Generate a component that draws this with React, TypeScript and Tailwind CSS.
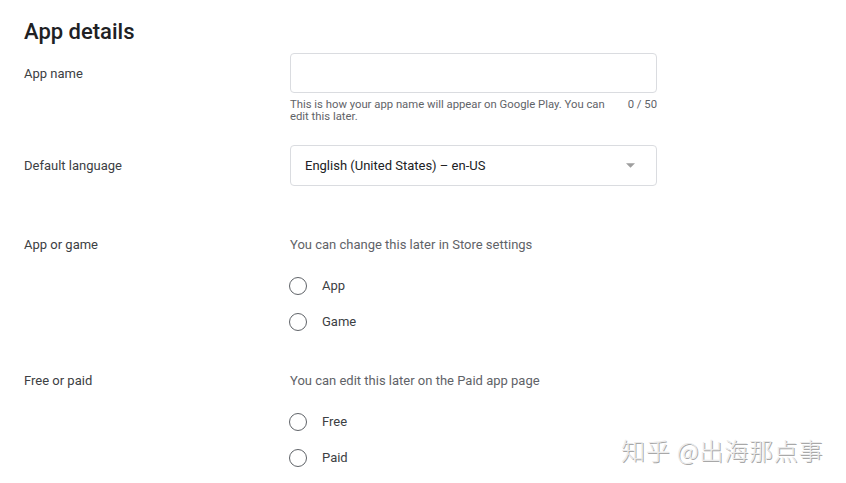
import React from "react";

function Radio({ label }: { label: string }) {
  return (
    <div className="flex items-center h-[36px]">
      <span className="w-[18px] h-[18px] rounded-full border-[1.5px] border-[#5f6368] ml-[-1px]" />
      <span className="ml-[15px] text-[13px] text-[#3c4043]">{label}</span>
    </div>
  );
}

export default function App() {
  return (
    <div
      className="w-[846px] h-[483px] bg-white relative overflow-hidden"
      style={{ fontFamily: "Roboto, 'Noto Sans', sans-serif" }}
    >
      <div className="pl-[24px] pt-[18px]">
        <h1 className="text-[22px] font-medium text-[#202124] leading-[28px]">App details</h1>

        {/* App name */}
        <div className="flex mt-[7px]">
          <div className="w-[266px] text-[13px] text-[#3c4043] pt-[13px] leading-[16px]">App name</div>
          <div className="w-[367px]">
            <div className="h-[40px] border border-[#dadce0] rounded-[4px]" />
            <div className="flex justify-between mt-[6px] text-[11.3px] leading-[12px] text-[#5f6368]">
              <span className="w-[320px]">This is how your app name will appear on Google Play. You can edit this later.</span>
              <span>0 / 50</span>
            </div>
          </div>
        </div>

        {/* Default language */}
        <div className="flex mt-[22px]">
          <div className="w-[266px] text-[13px] text-[#3c4043] leading-[41px]">Default language</div>
          <div className="w-[367px] h-[41px] border border-[#dadce0] rounded-[4px] flex items-center justify-between pl-[14px] pr-[21px]">
            <span className="text-[13px] text-[#202124]">English (United States) – en-US</span>
            <svg width="9" height="5" viewBox="0 0 10 5">
              <path d="M0 0 L10 0 L5 5 Z" fill="#9e9e9e" />
            </svg>
          </div>
        </div>

        {/* App or game */}
        <div className="flex mt-[51px]">
          <div className="w-[266px] text-[13px] text-[#3c4043] leading-[16px]">App or game</div>
          <div className="w-[367px]">
            <div className="text-[13px] leading-[16px] text-[#5f6368]">You can change this later in Store settings</div>
            <div className="mt-[15px]">
              <Radio label="App" />
              <Radio label="Game" />
            </div>
          </div>
        </div>

        {/* Free or paid */}
        <div className="flex mt-[33px]">
          <div className="w-[266px] text-[13px] text-[#3c4043] leading-[16px]">Free or paid</div>
          <div className="w-[367px]">
            <div className="text-[13px] leading-[16px] text-[#5f6368]">You can edit this later on the Paid app page</div>
            <div className="mt-[15px]">
              <Radio label="Free" />
              <Radio label="Paid" />
            </div>
          </div>
        </div>
      </div>

      <div
        className="absolute left-[621px] top-[432px] text-[24px] leading-[36px] text-[#ebebeb] tracking-[0.8px] font-light"
        style={{
          fontFamily: "'Noto Sans CJK SC', sans-serif",
          textShadow: "1px 1px 0 #a8a8a8",
        }}
      >
        知乎 @出海那点事
      </div>
    </div>
  );
}
